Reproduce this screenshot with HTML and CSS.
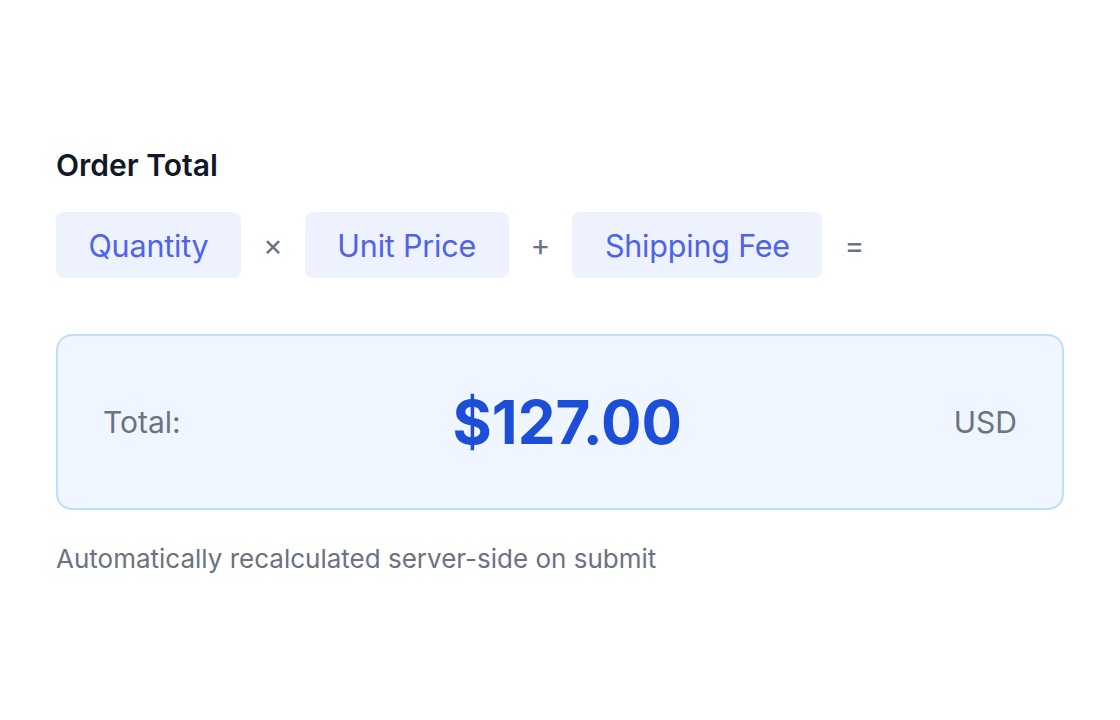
FILE: index.html
```html
<!DOCTYPE html>
<html lang="en">
<head>
<meta charset="utf-8">
<title>Order Total</title>
<link rel="stylesheet" href="styles.css">
</head>
<body>
<main class="page">
  <section class="order-total">
    <h2 class="title">Order Total</h2>
    <div class="formula">
      <span class="chip">Quantity</span>
      <span class="op">×</span>
      <span class="chip">Unit Price</span>
      <span class="op">+</span>
      <span class="chip">Shipping Fee</span>
      <span class="op">=</span>
    </div>
    <div class="total-box">
      <span class="total-label">Total:</span>
      <span class="total-amount">$127.00</span>
      <span class="total-currency">USD</span>
    </div>
    <p class="note">Automatically recalculated server-side on submit</p>
  </section>
</main>
</body>
</html>
```
FILE: styles.css
```css
* { box-sizing: border-box; }
html, body { margin: 0; padding: 0; background: #ffffff; }
body {
  font-family: Inter, "Noto Sans", "Liberation Sans", sans-serif;
  color: #111827;
}
.page {
  padding: 148px 56px 0 56px;
}
.title {
  margin: 0;
  font-size: 30px;
  line-height: 34px;
  font-weight: 600;
  color: #111827;
}
.formula {
  display: flex;
  align-items: center;
  gap: 22px;
  margin-top: 30px;
}
.chip {
  display: inline-flex;
  align-items: center;
  height: 66px;
  padding: 0 32.5px;
  background: #eef2ff;
  border-radius: 8px;
  color: #4f63e6;
  font-size: 30.5px;
  letter-spacing: -0.2px;
}
.op {
  font-size: 30px;
  color: #6b7280;
}
.total-box {
  margin-top: 56px;
  height: 176px;
  border: 2px solid #bfdbfe;
  background: #eff6ff;
  border-radius: 16px;
  display: flex;
  align-items: center;
  justify-content: space-between;
  padding: 0 45px;
}
.total-label {
  font-size: 30px;
  color: #6b7280;
}
.total-amount {
  font-size: 60px;
  font-weight: 700;
  color: #1d4ed8;
}
.total-currency {
  font-size: 30px;
  color: #6b7280;
}
.note {
  margin: 33px 0 0 0;
  font-size: 26px;
  color: #6b7280;
}
```
